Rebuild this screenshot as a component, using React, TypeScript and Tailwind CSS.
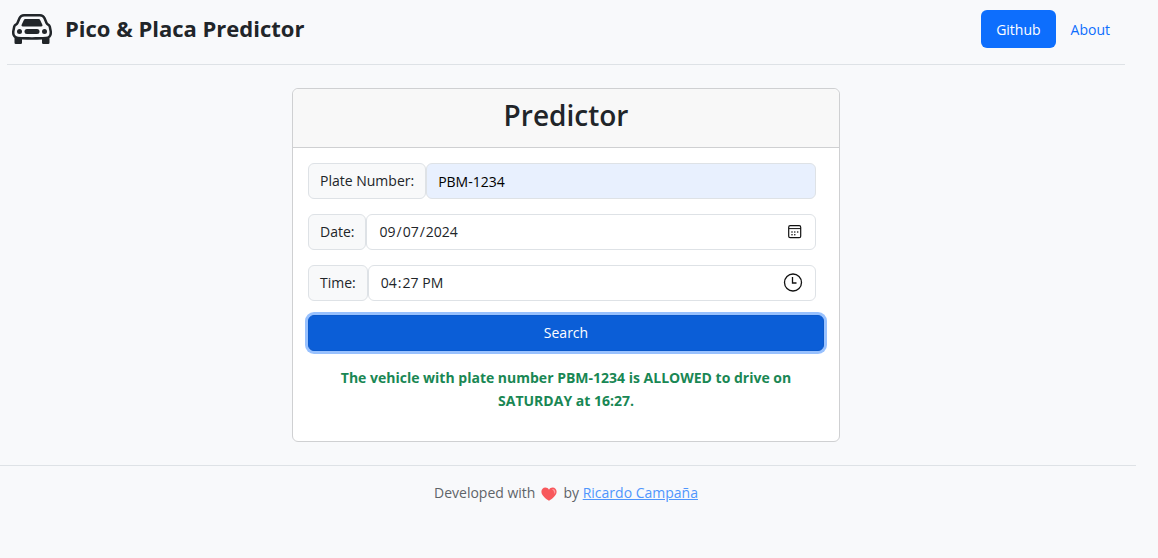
import type { ReactNode } from "react";

function CarIcon() {
  return (
    <svg width="40" height="40" viewBox="0 0 16 16" fill="currentColor" aria-hidden="true">
      <circle cx="3" cy="9" r="1" />
      <circle cx="13" cy="9" r="1" />
      <path d="M6 8a1 1 0 0 0 0 2h4a1 1 0 1 0 0-2z" />
      <path d="M5.300 4h5.400a.6.6 0 0 1 .55.350l.9 1.900a.5.5 0 0 1-.45.700H4.300a.5.5 0 0 1-.45-.7l.9-1.900A.6.6 0 0 1 5.300 4z" />
      <path
        fillRule="evenodd"
        d="M2.520 3.515A2.500 2.500 0 0 1 4.820 2h6.362c1 0 1.904.596 2.298 1.515l.792 1.848c.075.175.21.319.38.404.5.25.855.715.965 1.262l.335 1.679q.05.242.049.49v.413c0 .814-.39 1.543-1 1.997V13.500a.5.5 0 0 1-.5.5h-2a.5.5 0 0 1-.5-.5v-1.338c-1.292.048-2.745.088-4 .088s-2.708-.04-4-.088V13.500a.5.5 0 0 1-.5.5h-2a.5.5 0 0 1-.5-.5v-1.892c-.61-.454-1-1.183-1-1.997v-.413a2.500 2.500 0 0 1 .049-.49l.335-1.680c.11-.546.465-1.012.964-1.261a.8.8 0 0 0 .381-.404l.792-1.848ZM4.820 3a1.500 1.500 0 0 0-1.379.91l-.792 1.847a1.800 1.800 0 0 1-.853.904.8.8 0 0 0-.43.564L1.030 8.904a1.500 1.500 0 0 0-.03.294v.413c0 .796.62 1.448 1.408 1.484 1.555.07 3.786.155 5.592.155s4.037-.084 5.592-.155A1.480 1.480 0 0 0 15 9.611v-.413q0-.148-.03-.294l-.335-1.680a.8.8 0 0 0-.43-.563 1.800 1.800 0 0 1-.853-.904l-.792-1.848A1.500 1.500 0 0 0 11.180 3z"
      />
    </svg>
  );
}

function CalendarIcon() {
  return (
    <svg width="14" height="14" viewBox="0 0 14 14" fill="none" aria-hidden="true">
      <rect x="0.7" y="0.7" width="12" height="12" rx="1.5" stroke="#111" strokeWidth="1.2" />
      <path d="M1 3.600h12" stroke="#111" strokeWidth="1" />
      <g fill="#111">
        <circle cx="4" cy="7" r="0.8" />
        <circle cx="6.800" cy="7" r="0.8" />
        <circle cx="9.700" cy="7" r="0.8" />
        <circle cx="4" cy="9.700" r="0.8" />
        <circle cx="6.800" cy="9.700" r="0.8" />
      </g>
    </svg>
  );
}

function ClockIcon() {
  return (
    <svg width="20" height="20" viewBox="0 0 20 20" fill="none" aria-hidden="true">
      <circle cx="10" cy="9.500" r="8.500" stroke="#111" strokeWidth="1.300" />
      <path d="M9.500 4v6H13.500" stroke="#111" strokeWidth="1.300" />
    </svg>
  );
}

function Heart() {
  return (
    <svg className="mx-1.5 inline-block" width="16" height="14" viewBox="0 0 16 14" role="img" aria-label="love">
      <path
        d="M8 13.800C5.200 12 .4 8.500.4 4.700.4 2.200 2.200.5 4.300.5 6 .5 7.300 1.400 8 2.700 8.700 1.400 10 .5 11.700.5c2.100 0 3.900 1.700 3.900 4.200 0 3.800-4.800 7.300-7.600 9.100Z"
        fill="#f8585c"
      />
      <path d="M11 2c1.800-.4 3.300.9 3.300 2.900 0 .9-.3 1.500-.7 2C13.200 4.800 12.400 3.200 11 2Z" fill="#ff9a9e" />
    </svg>
  );
}

const inputClass =
  "h-full w-full rounded-md border border-[#dee2e6] px-[11px] text-sm outline-none [&::-webkit-calendar-picker-indicator]:opacity-0";

function Field({ id, label, children }: { id: string; label: string; children: ReactNode }) {
  return (
    <div className="flex h-9">
      <label
        htmlFor={id}
        className="flex shrink-0 items-center rounded-md border border-[#dee2e6] bg-[#f8f9fa] px-[11px]"
      >
        {label}
      </label>
      <div className="relative min-w-0 flex-1">{children}</div>
    </div>
  );
}

export default function App() {
  return (
    <div className="min-h-screen overflow-x-hidden bg-[#f8f9fb] pr-[26px] font-['Open_Sans','Noto_Sans',sans-serif] text-sm text-[#212529]">
      <header className="mx-[7px] flex h-[65px] items-start justify-between border-b border-[#dee2e6] pt-[10px]">
        <div className="flex h-[38px] items-center gap-[13px] pl-[5px]">
          <CarIcon />
          <h1 className="text-[22px] font-bold">Pico &amp; Placa Predictor</h1>
        </div>
        <nav className="flex h-[38px]">
          <a href="#github" className="flex items-center rounded-md bg-[#0d6efd] px-[15px] pt-0.5 text-white">
            Github
          </a>
          <a href="#about" className="flex items-center px-[15px] pt-0.5 text-[#0d6efd]">
            About
          </a>
        </nav>
      </header>

      <main className="mx-auto mt-[23px] w-full max-w-[548px] rounded-md border border-[#cfd0d2] bg-white">
        <h2 className="h-[59px] rounded-t-md border-b border-[#cfd0d2] bg-[#f8f8f8] pt-2 text-center text-[28px] leading-9 font-semibold">
          Predictor
        </h2>
        <form className="px-[15px] pt-[15px] pb-[29px]" onSubmit={(e) => e.preventDefault()}>
          <div className="flex flex-col gap-[15px] pr-2">
            <Field id="plate" label="Plate Number:">
              <input id="plate" type="text" defaultValue="PBM-1234" className={`${inputClass} bg-[#e8f0fe] text-black`} />
            </Field>
            <Field id="date" label="Date:">
              <input id="date" type="date" defaultValue="2024-09-07" className={`${inputClass} bg-white`} />
              <span className="pointer-events-none absolute inset-y-0 right-3.5 flex items-center">
                <CalendarIcon />
              </span>
            </Field>
            <Field id="time" label="Time:">
              <input id="time" type="time" defaultValue="16:27" className={`${inputClass} bg-white`} />
              <span className="pointer-events-none absolute inset-y-0 right-[13px] flex items-center">
                <ClockIcon />
              </span>
            </Field>
          </div>
          <button
            type="submit"
            className="mt-3.5 h-9 w-full rounded-md border border-[#0a58ca] bg-[#0b5ed7] text-white ring-3 ring-[#98c1fe]"
          >
            Search
          </button>
          <p className="mt-[15px] px-4 text-center leading-[23px] font-bold text-[#198754]">
            The vehicle with plate number PBM-1234 is ALLOWED to drive on SATURDAY at 16:27.
          </p>
        </form>
      </main>

      <footer className="mt-[23px] -mr-1 border-t border-[#dee2e6] pt-[15px] pr-1 text-center leading-[23px] text-[#5f6469]">
        Developed with
        <Heart />
        by{" "}
        <a href="#author" className="text-[#4f96fd] underline">
          Ricardo Campaña
        </a>
      </footer>
    </div>
  );
}
